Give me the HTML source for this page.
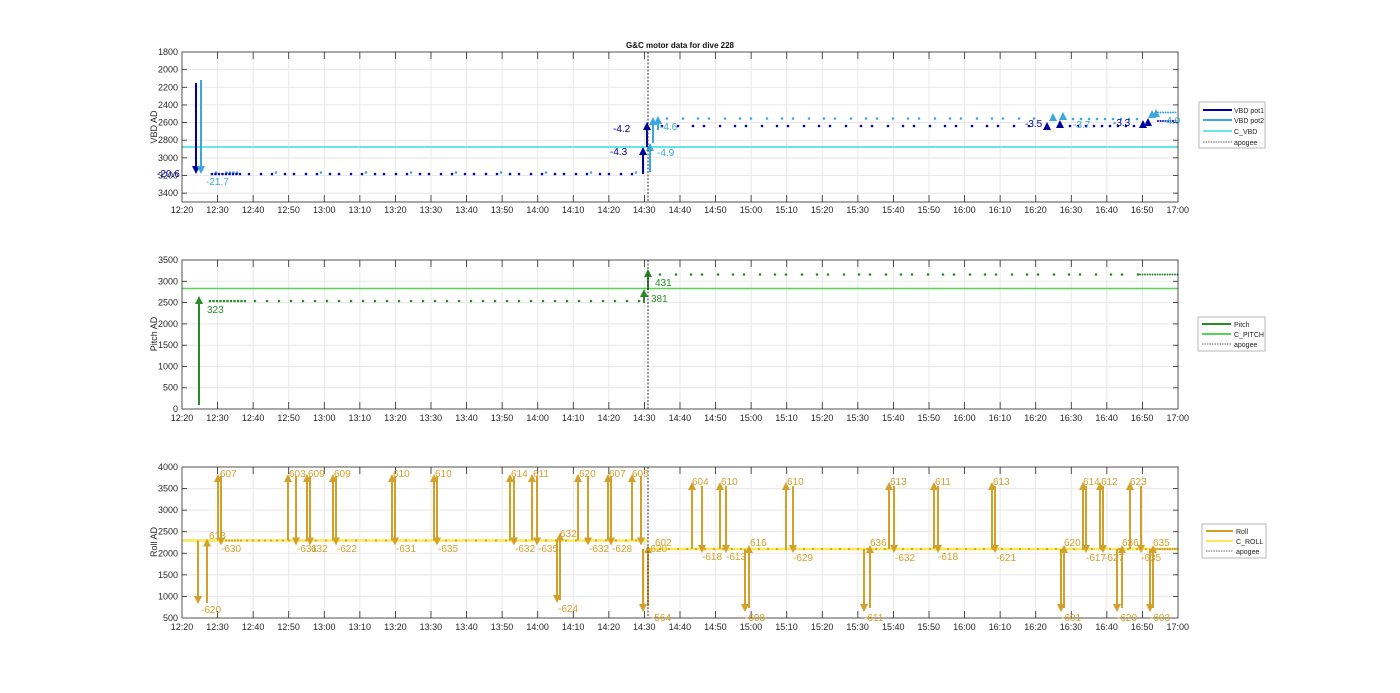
<!DOCTYPE html>
<html><head><meta charset="utf-8"><style>
html,body{margin:0;padding:0;background:#fff;width:1400px;height:693px;overflow:hidden;font-family:"Liberation Sans",Arial,sans-serif}
.xl{position:absolute;left:164.2px;width:1031.6px;display:flex;font-size:9px;color:#262626}
.xl span{flex:0 0 35.571px;text-align:center}
svg{position:absolute;left:0;top:0}
</style></head><body>
<svg id="s" width="1400" height="693" font-family="Liberation Sans, Arial, sans-serif">
<g id="grid" stroke="#e8e8e8" stroke-width="1"></g>
<line x1="182" y1="147" x2="1178" y2="147" stroke="#66e6e6" stroke-width="2"/>
<line x1="182" y1="288.5" x2="1178" y2="288.5" stroke="#55d455" stroke-width="1.5"/>
<line x1="182" y1="540.5" x2="648" y2="540.5" stroke="#f8ea50" stroke-width="2.5"/>
<line x1="648" y1="549" x2="1178" y2="549" stroke="#f8ea50" stroke-width="2.5"/>
<g id="data"></g>
<g stroke="#333" stroke-width="1" stroke-dasharray="2,1.5">
<line x1="648" y1="52" x2="648" y2="202"/><line x1="648" y1="260" x2="648" y2="409"/><line x1="648" y1="467" x2="648" y2="618"/>
</g>
<g id="axes" fill="none" stroke="#262626" stroke-width="0.8">
<rect x="182" y="52" width="996" height="150"/>
<rect x="182" y="260" width="996" height="149"/>
<rect x="182" y="467" width="996" height="151"/>
</g>
<g id="ticks" stroke="#262626" stroke-width="0.8"></g>
<text x="680" y="48" font-size="8" font-weight="bold" text-anchor="middle" fill="#111">G&amp;C motor data for dive 228</text>
<g font-size="9" fill="#262626" text-anchor="end">
<text x="178" y="55">1800</text><text x="178" y="72.6">2000</text><text x="178" y="90.3">2200</text><text x="178" y="107.9">2400</text><text x="178" y="125.6">2600</text><text x="178" y="143.2">2800</text><text x="178" y="160.8">3000</text><text x="178" y="178.5">3200</text><text x="178" y="196.1">3400</text>
<text x="178" y="263">3500</text><text x="178" y="284.3">3000</text><text x="178" y="305.6">2500</text><text x="178" y="326.9">2000</text><text x="178" y="348.1">1500</text><text x="178" y="369.4">1000</text><text x="178" y="390.7">500</text><text x="178" y="412">0</text>
<text x="178" y="470">4000</text><text x="178" y="491.6">3500</text><text x="178" y="513.1">3000</text><text x="178" y="534.7">2500</text><text x="178" y="556.3">2000</text><text x="178" y="577.9">1500</text><text x="178" y="599.4">1000</text><text x="178" y="621">500</text>
</g>
<g font-size="9" fill="#262626" text-anchor="middle">
<text transform="translate(157,127) rotate(-90)">VBD AD</text>
<text transform="translate(157,334) rotate(-90)">Pitch AD</text>
<text transform="translate(157,542) rotate(-90)">Roll AD</text>
</g>
<!-- VBD labels -->
<g font-size="10">
<text x="157" y="177" fill="#0000a0">-20.6</text>
<text x="206" y="185" fill="#3aa8e0">-21.7</text>
<text x="610" y="155" fill="#0000a0">-4.3</text>
<text x="613" y="132" fill="#0000a0">-4.2</text>
<text x="657" y="156" fill="#3aa8e0">-4.9</text>
<text x="660" y="130" fill="#3aa8e0">-4.6</text>
<text x="1025" y="127" fill="#0000a0">-3.5</text>
<text x="1073" y="128" fill="#3aa8e0">-3.7</text>
<text x="1113" y="126" fill="#0000a0">-3.3</text>
<text x="1163" y="124" fill="#3aa8e0">-4.0</text>
</g>
<g font-size="10" fill="#2a8a2a">
<text x="207" y="313">323</text><text x="651" y="302">381</text><text x="655" y="286">431</text>
</g>
<g font-size="10" fill="#d4a02a">
<text x="201" y="613">-620</text><text x="209" y="539">613</text><text x="220" y="477">607</text><text x="221" y="552">-630</text>
<text x="289" y="477">603</text><text x="297" y="552">-631</text><text x="308" y="477">609</text><text x="311" y="552">632</text>
<text x="334" y="477">609</text><text x="337" y="552">-622</text>
<text x="393" y="477">610</text><text x="396" y="552">-631</text>
<text x="435" y="477">610</text><text x="438" y="552">-635</text>
<text x="511" y="477">614</text><text x="515" y="552">-632</text><text x="533" y="477">611</text><text x="538" y="552">-635</text>
<text x="558" y="612">-624</text><text x="560" y="537">632</text>
<text x="579" y="477">620</text><text x="589" y="552">-632</text><text x="609" y="477">607</text><text x="612" y="552">-628</text>
<text x="632" y="477">605</text><text x="647" y="552">-620</text>
<text x="651" y="621">-564</text><text x="655" y="546">602</text>
<text x="692" y="485">604</text><text x="702" y="560">-618</text><text x="721" y="485">610</text><text x="726" y="560">-613</text>
<text x="745" y="621">-608</text><text x="750" y="546">616</text>
<text x="787" y="485">610</text><text x="793" y="561">-629</text>
<text x="864" y="621">-611</text><text x="870" y="546">636</text>
<text x="890" y="485">613</text><text x="895" y="561">-632</text>
<text x="935" y="485">611</text><text x="938" y="560">-618</text>
<text x="993" y="485">613</text><text x="996" y="561">-621</text>
<text x="1061" y="621">-601</text><text x="1064" y="546">620</text>
<text x="1083" y="485">614</text><text x="1086" y="561">-617</text><text x="1101" y="485">612</text><text x="1104" y="561">-627</text>
<text x="1117" y="621">-620</text><text x="1122" y="546">636</text>
<text x="1130" y="485">623</text><text x="1141" y="561">-635</text>
<text x="1150" y="621">-603</text><text x="1153" y="546">635</text>
</g>
<!-- legends -->
<g font-size="7" fill="#222">
<rect x="1199" y="102" width="66" height="46" fill="#fff" stroke="#999" stroke-width="0.7"/>
<line x1="1203" y1="110" x2="1232" y2="110" stroke="#0000a0" stroke-width="2"/><text x="1234" y="113">VBD pot1</text>
<line x1="1203" y1="120" x2="1232" y2="120" stroke="#3aa8e0" stroke-width="2"/><text x="1234" y="123">VBD pot2</text>
<line x1="1203" y1="131" x2="1232" y2="131" stroke="#66e6e6" stroke-width="2"/><text x="1234" y="134">C_VBD</text>
<line x1="1203" y1="142" x2="1232" y2="142" stroke="#333" stroke-width="0.8" stroke-dasharray="1.5,1"/><text x="1234" y="145">apogee</text>
<rect x="1198" y="317" width="67" height="34" fill="#fff" stroke="#999" stroke-width="0.7"/>
<line x1="1202" y1="324" x2="1231" y2="324" stroke="#2a8a2a" stroke-width="2"/><text x="1234" y="327">Pitch</text>
<line x1="1202" y1="334" x2="1231" y2="334" stroke="#55d455" stroke-width="2"/><text x="1234" y="337">C_PITCH</text>
<line x1="1202" y1="344" x2="1231" y2="344" stroke="#333" stroke-width="0.8" stroke-dasharray="1.5,1"/><text x="1234" y="347">apogee</text>
<rect x="1202" y="524" width="64" height="34" fill="#fff" stroke="#999" stroke-width="0.7"/>
<line x1="1206" y1="531" x2="1233" y2="531" stroke="#d4a02a" stroke-width="2"/><text x="1236" y="534">Roll</text>
<line x1="1206" y1="541" x2="1233" y2="541" stroke="#f8ea50" stroke-width="2"/><text x="1236" y="544">C_ROLL</text>
<line x1="1206" y1="551" x2="1233" y2="551" stroke="#333" stroke-width="0.8" stroke-dasharray="1.5,1"/><text x="1236" y="554">apogee</text>
</g>
</svg>
<div class="xl" style="top:205px"><span>12:20</span><span>12:30</span><span>12:40</span><span>12:50</span><span>13:00</span><span>13:10</span><span>13:20</span><span>13:30</span><span>13:40</span><span>13:50</span><span>14:00</span><span>14:10</span><span>14:20</span><span>14:30</span><span>14:40</span><span>14:50</span><span>15:00</span><span>15:10</span><span>15:20</span><span>15:30</span><span>15:40</span><span>15:50</span><span>16:00</span><span>16:10</span><span>16:20</span><span>16:30</span><span>16:40</span><span>16:50</span><span>17:00</span></div>
<div class="xl" style="top:413px"><span>12:20</span><span>12:30</span><span>12:40</span><span>12:50</span><span>13:00</span><span>13:10</span><span>13:20</span><span>13:30</span><span>13:40</span><span>13:50</span><span>14:00</span><span>14:10</span><span>14:20</span><span>14:30</span><span>14:40</span><span>14:50</span><span>15:00</span><span>15:10</span><span>15:20</span><span>15:30</span><span>15:40</span><span>15:50</span><span>16:00</span><span>16:10</span><span>16:20</span><span>16:30</span><span>16:40</span><span>16:50</span><span>17:00</span></div>
<div class="xl" style="top:622px"><span>12:20</span><span>12:30</span><span>12:40</span><span>12:50</span><span>13:00</span><span>13:10</span><span>13:20</span><span>13:30</span><span>13:40</span><span>13:50</span><span>14:00</span><span>14:10</span><span>14:20</span><span>14:30</span><span>14:40</span><span>14:50</span><span>15:00</span><span>15:10</span><span>15:20</span><span>15:30</span><span>15:40</span><span>15:50</span><span>16:00</span><span>16:10</span><span>16:20</span><span>16:30</span><span>16:40</span><span>16:50</span><span>17:00</span></div>
<script>
var NS="http://www.w3.org/2000/svg";
function el(p,t,a){var e=document.createElementNS(NS,t);for(var k in a)e.setAttribute(k,a[k]);p.appendChild(e);return e;}
var G=document.getElementById('grid'),T=document.getElementById('ticks'),D=document.getElementById('data');
var boxes=[[52,202,52,17.64,9],[260,409,260,21.3,7],[467,618,467,21.57,7]];
boxes.forEach(function(b){
 for(var i=1;i<28;i++){var x=182+i*35.571;el(G,'line',{x1:x,y1:b[0],x2:x,y2:b[1]});
  el(T,'line',{x1:x,y1:b[0],x2:x,y2:b[0]+7});el(T,'line',{x1:x,y1:b[1],x2:x,y2:b[1]-7});}
 for(var j=1;j<b[4]+(b[4]==9?0:0);j++){var y=b[2]+j*b[3];if(y<b[1]-1){el(G,'line',{x1:182,y1:y,x2:1178,y2:y});
  el(T,'line',{x1:182,y1:y,x2:187,y2:y});el(T,'line',{x1:1178,y1:y,x2:1173,y2:y});}}
});
function arrow(x,y0,y1,c,w){el(D,'line',{x1:x,y1:y0,x2:x,y2:y1+(y1<y0?5:-5),stroke:c,'stroke-width':w||2});
 var d=y1<y0?1:-1;el(D,'polygon',{points:(x-4)+','+(y1+8*d)+' '+(x+4)+','+(y1+8*d)+' '+x+','+y1,fill:c});}
function dot(x,y,c,r){el(D,'circle',{cx:x,cy:y,r:r||1.3,fill:c});}
var NAV='#0000a0',LB='#3aa8e0',GR='#2a8a2a',GO='#d4a02a';
// VBD
arrow(196,83,174,NAV);arrow(201,80,174,LB);
for(var x=212;x<640;x+=(x<240?3.5:9+((x*7)%5))){dot(x,174,NAV);if((Math.round(x)%3)!=0)dot(x+4,172.5,LB);}
arrow(643,174,147,NAV);arrow(647,147,122,NAV);arrow(650,172,143,LB);arrow(653,143,117,LB);arrow(658,130,116,LB);
for(var x=662;x<1040;x+=11+((x*3)%7)){dot(x,126,NAV);dot(x+5,118.5,LB);}
arrow(1047,128,122,NAV);arrow(1060,127,120,NAV);arrow(1053,121,113,LB);arrow(1063,120,112,LB);
for(var x=1070;x<1140;x+=8){dot(x,126,NAV);dot(x+3,119,LB);}
arrow(1143,126,120,NAV);arrow(1148,125,118,NAV);arrow(1152,118,110,LB);arrow(1156,117,109,LB);
for(var x=1158;x<1178;x+=2.5){dot(x,121,NAV,1);dot(x,112.5,LB,1);}
// Pitch
arrow(199,405,296,GR);
for(var x=210;x<640;x+=(x<245?3.5:9+((x*5)%6))){dot(x,301,GR);}
arrow(644,303,289,GR);arrow(648,290,269,GR);
for(var x=660;x<1140;x+=10+((x*3)%7)){dot(x,274.5,GR);}
for(var x=1140;x<1178;x+=2.5){dot(x,274.5,GR,1);}
// Roll
var RB=540.5;
for(var x=226;x<290;x+=(x<240?3:6))dot(x,RB,GO,1.1);
for(var x=296;x<640;x+=10)dot(x,RB,GO,1.1);
for(var x=660;x<1178;x+=(x<1150?9:2.5))dot(x,549,GO,1.1);
arrow(198,RB,604,GO);arrow(207,603,RB-2,GO);
var pairs=[[218,221],[288,296],[307,310],[333,336],[392,395],[434,437],[510,514],[532,537],[578,588],[608,611],[632,641]];
pairs.forEach(function(p){arrow(p[0],RB,474,GO);arrow(p[1],476,RB+5,GO);});
arrow(557,RB,603,GO);arrow(560,600,RB-8,GO);
arrow(643,549,612,GO);arrow(648,606,545,GO);
var p2=[[692,702],[720,726],[786,793],[889,894],[934,938],[992,995],[1083,1086],[1100,1103],[1130,1141]];
p2.forEach(function(p){arrow(p[0],549,482,GO);arrow(p[1],486,553,GO);});
[[745,749],[864,870],[1061,1064],[1117,1122],[1150,1153]].forEach(function(p){arrow(p[0],549,612,GO);arrow(p[1],608,545,GO);});
</script>
</body></html>
